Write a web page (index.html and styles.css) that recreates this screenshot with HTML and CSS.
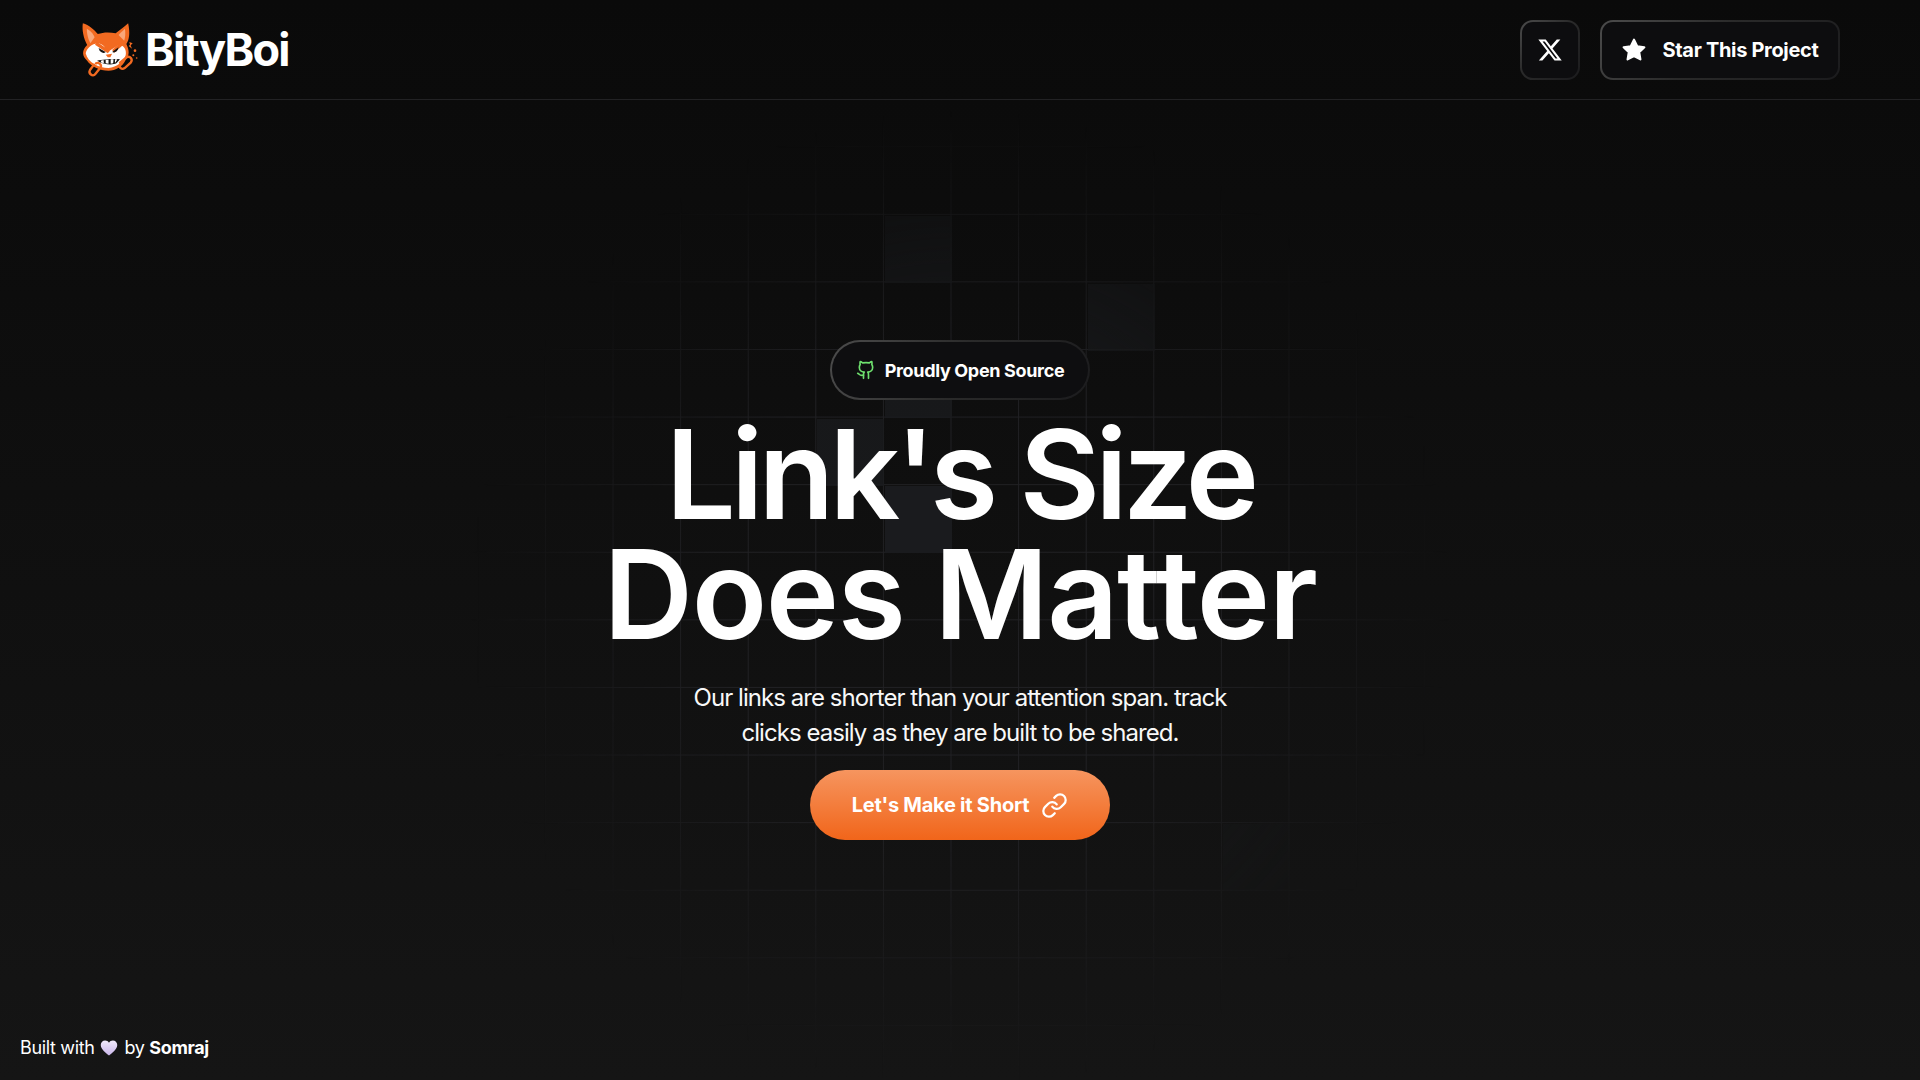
FILE: index.html
```html
<!DOCTYPE html>
<html lang="en">
<head>
<meta charset="utf-8">
<title>BityBoi</title>
<link rel="stylesheet" href="styles.css">
</head>
<body>
<div class="grid-layer">
  <div class="grid-lines">
    <span class="cell c1"></span>
    <span class="cell c2"></span>
    <span class="cell c3"></span>
    <span class="cell c4"></span>
    <span class="cell c5"></span>
    <span class="cell c6"></span>
  </div>
</div>
<header class="topbar">
  <a class="brand">
    <svg class="fox" viewBox="0 0 180 180">
      <g transform="scale(1.07 1)">
        <path fill="#f26a21" d="M8 10C25 15 40 30 50 42C65 36 85 36 100 40C112 30 125 20 135 10C141 40 138 60 130 72C138 90 140 105 128 120C120 140 100 152 80 152C55 152 30 138 20 122C5 108 5 90 20 75C10 55 5 30 8 10Z"/>
        <path fill="#f9a77a" d="M19 26C32 33 39 45 41 52L29 70C22 55 19 40 19 26Z"/>
        <path fill="#f9a77a" d="M126 26C118 34 112 40 108 45L124 62C127 50 128 38 126 26Z"/>
        <path fill="#fff" d="M16 100C20 82 38 66 58 72C68 76 74 90 78 96C86 90 94 86 106 76C120 70 132 88 128 106C122 126 104 142 80 144C52 144 22 128 16 100Z"/>
        <path fill="#f26a21" d="M48 66L84 92L78 100L42 74Z"/>
        <path fill="#f26a21" d="M118 62L90 90L96 98L124 72Z"/>
        <path fill="#161412" d="M52 84L72 96C66 102 56 98 52 84Z"/>
        <path fill="#161412" d="M108 82L90 96C96 100 106 96 108 82Z"/>
        <path fill="#f26a21" d="M72 104L90 101L85 112L78 112Z"/>
        <path fill="#161412" d="M48 122C64 118 98 116 112 118L102 130C90 136 66 134 48 122Z"/>
        <path fill="#fff" d="M58 122L66 120L67 129L60 128ZM72 119L80 119L80 131L72 130ZM86 118L94 118L93 130L86 131ZM98 118L105 118L100 127L98 128Z"/>
      </g>
      <g fill="none" stroke="#f26a21" stroke-width="7" stroke-linecap="round">
        <path d="M42 134L30 150C24 160 38 172 46 162L62 142C66 134 56 126 48 130"/>
        <path d="M120 128L140 112C150 106 160 118 152 128L134 144C126 150 116 144 120 134"/>
      </g>
      <g fill="#f26a21">
        <path d="M148 66L158 70L152 76L156 86L146 78L150 74Z"/>
        <circle cx="165" cy="92" r="4"/>
        <circle cx="160" cy="106" r="3"/>
        <circle cx="170" cy="114" r="2.5"/>
      </g>
    </svg>
    <span class="brand-name">BityBoi</span>
  </a>
  <nav class="actions">
    <a class="ghost-btn icon-only">
      <svg class="x-icon" viewBox="0 0 24 24"><path fill="#fff" d="M18.244 2.25h3.308l-7.227 8.26 8.502 11.24H16.17l-5.214-6.817L4.99 21.75H1.68l7.73-8.835L1.254 2.25H8.08l4.713 6.231zm-1.161 17.52h1.833L7.084 4.126H5.117z"/></svg>
    </a>
    <a class="ghost-btn star-btn">
      <svg class="star-icon" viewBox="0 0 24 24"><path fill="#fff" stroke="#fff" stroke-width="2" stroke-linejoin="round" d="M12 2.5l2.95 6 6.6.96-4.78 4.65 1.13 6.57L12 17.58l-5.9 3.1 1.13-6.57L2.45 9.46l6.6-.96z"/></svg>
      <span>Star This Project</span>
    </a>
  </nav>
</header>
<main class="hero">
  <div class="badge">
    <svg class="gh-icon" viewBox="0 0 24 24" fill="none" stroke="#6ee06e" stroke-width="2" stroke-linecap="round" stroke-linejoin="round"><path d="M15 22v-4a4.8 4.8 0 0 0-1-3.5c3 0 6-2 6-5.5.08-1.25-.27-2.48-1-3.5.28-1.15.28-2.35 0-3.5 0 0-1 0-3 1.5-2.64-.5-5.36-.5-8 0C6 2 5 2 5 2c-.3 1.15-.3 2.35 0 3.5A5.403 5.403 0 0 0 4 9c0 3.5 3 5.5 6 5.5-.39.49-.68 1.05-.85 1.65-.17.6-.22 1.23-.15 1.85v4"/><path d="M9 18c-4.51 2-5-2-7-2"/></svg>
    <span>Proudly Open Source</span>
  </div>
  <h1 class="headline"><span class="line-one">Link's Size</span><span class="line-two">Does Matter</span></h1>
  <p class="lede">Our links are shorter than your attention span. track<br>clicks easily as they are built to be shared.</p>
  <a class="cta">
    <span>Let's Make it Short</span>
    <svg class="link-icon" viewBox="0 0 24 24" fill="none" stroke="#fff" stroke-width="2" stroke-linecap="round" stroke-linejoin="round"><path d="M10 13a5 5 0 0 0 7.54.54l3-3a5 5 0 0 0-7.07-7.07l-1.72 1.71"/><path d="M14 11a5 5 0 0 0-7.54-.54l-3 3a5 5 0 0 0 7.07 7.07l1.71-1.71"/></svg>
  </a>
</main>
<footer class="credit">
  <span>Built with</span>
  <svg class="heart" viewBox="0 0 24 24"><defs><linearGradient id="hg" x1="0" y1="0" x2="0" y2="1"><stop offset="0" stop-color="#f1eafa"/><stop offset="1" stop-color="#c9b5ea"/></linearGradient></defs><path fill="url(#hg)" d="M12 22C9 19.500 1 14 1 8C1 4.500 3.700 2 6.800 2C9 2 11 3.200 12 5C13 3.200 15 2 17.200 2C20.300 2 23 4.500 23 8C23 14 15 19.500 12 22Z"/></svg>
  <span>by <b>Somraj</b></span>
</footer>
</body>
</html>
```
FILE: styles.css
```css
* { box-sizing: border-box; }
html, body { height: 100%; }
body {
  margin: 0;
  min-height: 100vh;
  display: flex;
  flex-direction: column;
  position: relative;
  overflow: hidden;
  color: #fff;
  font-family: Inter, "Noto Sans", sans-serif;
  background: linear-gradient(180deg, #0a0a0a 0%, #151515 100%);
}
.grid-layer {
  position: absolute;
  inset: 0;
  pointer-events: none;
  -webkit-mask-image: radial-gradient(ellipse 490px 490px at 960px 600px, #000 50%, transparent 100%);
  mask-image: radial-gradient(ellipse 490px 490px at 960px 600px, #000 50%, transparent 100%);
}
.grid-lines {
  position: absolute;
  inset: 0;
  background-image:
    linear-gradient(90deg, #212124 1px, transparent 1px),
    linear-gradient(180deg, #212124 1px, transparent 1px);
  background-size: 67.6px 67.6px;
  background-position: 4.2px 11px;
}
.cell {
  position: absolute;
  width: 67px;
  height: 67px;
  background: #1a1b1e;
}
.c1 { left: 885px; top: 216px; opacity: .75; }
.c2 { left: 1088px; top: 284px; opacity: .75; }
.c3 { left: 885px; top: 351px; opacity: .8; }
.c4 { left: 817px; top: 419px; opacity: .8; }
.c5 { left: 885px; top: 486px; }
.c6 { left: 1223px; top: 824px; opacity: .5; }

.topbar {
  position: relative;
  flex: none;
  height: 100px;
  padding: 20px 80px 19px 80px;
  display: flex;
  align-items: center;
  justify-content: space-between;
  border-bottom: 1px solid #222224;
}
.brand { display: flex; align-items: center; gap: 5px; }
.fox { width: 60px; height: 60px; display: block; }
.brand-name {
  font-size: 45px;
  font-weight: 700;
  letter-spacing: -1.8px;
  line-height: 60px;
}
.actions { display: flex; gap: 20px; }
.ghost-btn {
  height: 60px;
  display: flex;
  align-items: center;
  justify-content: center;
  border-radius: 13px;
  border: 2px solid transparent;
  background:
    linear-gradient(#0d0d0f, #0d0d0f) padding-box,
    linear-gradient(135deg, #4c4c4c 0%, #2a2a2a 45%, #1b1b1d 100%) border-box;
}
.icon-only { width: 60px; }
.x-icon { width: 26px; height: 26px; }
.star-btn {
  width: 240px;
  gap: 15px;
  font-size: 20px;
  font-weight: 700;
  letter-spacing: -0.32px;
}
.star-icon { width: 26px; height: 26px; }

.hero {
  position: relative;
  flex: 1;
  display: flex;
  flex-direction: column;
  align-items: center;
  justify-content: center;
}
.badge {
  width: 260px;
  height: 60px;
  display: flex;
  align-items: center;
  justify-content: center;
  gap: 9px;
  border-radius: 30px;
  border: 2px solid transparent;
  font-size: 18px;
  font-weight: 700;
  letter-spacing: -0.33px;
  background:
    linear-gradient(#0e0e10, #0e0e10) padding-box,
    linear-gradient(115deg, #4c4c4c 0%, #2a2a2a 50%, #1c1c1e 100%) border-box;
}
.gh-icon { width: 20px; height: 20px; }
.headline {
  margin: 14px 0 26px;
  font-size: 124px;
  line-height: 120px;
  font-weight: 640;
  text-align: center;
}
.line-one { display: block; letter-spacing: -4.9px; }
.line-two { display: block; letter-spacing: -1.4px; }
.lede {
  margin: 0 0 20px;
  font-size: 24px;
  line-height: 35px;
  font-weight: 400;
  letter-spacing: -0.95px;
  text-align: center;
  color: #f8f8f8;
}
.cta {
  width: 300px;
  height: 70px;
  display: flex;
  align-items: center;
  justify-content: center;
  gap: 12px;
  border-radius: 35px;
  font-size: 20px;
  font-weight: 700;
  letter-spacing: -0.25px;
  background: linear-gradient(180deg, #f6955f 0%, #f1651a 100%);
}
.link-icon { width: 27px; height: 27px; }

.credit {
  position: absolute;
  left: 20px;
  bottom: 20px;
  display: flex;
  align-items: center;
  gap: 6px;
  font-size: 18px;
  letter-spacing: -0.35px;
  line-height: 24px;
}
.credit b { font-weight: 700; }
.heart { width: 18px; height: 18px; }
```
